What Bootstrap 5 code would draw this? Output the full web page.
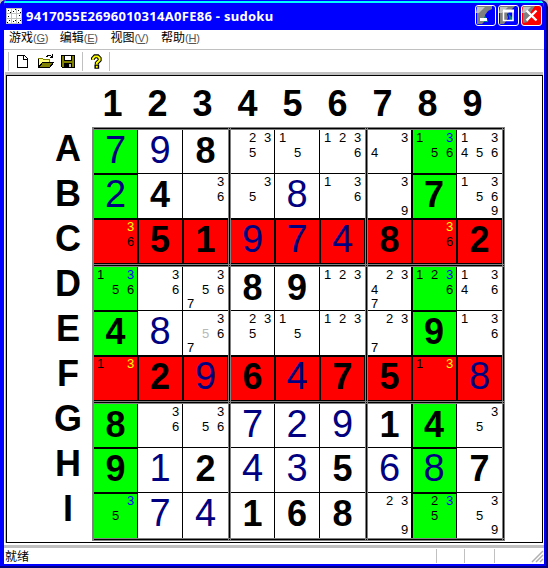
<!DOCTYPE html>
<html lang="zh-CN">
<head>
<meta charset="utf-8">
<title>sudoku</title>
<link href="https://cdn.jsdelivr.net/npm/bootstrap@5.3.0/dist/css/bootstrap.min.css" rel="stylesheet">
<style>
html,body{width:548px;height:568px;overflow:hidden;margin:0}
body{font-family:"Liberation Sans","Noto Sans CJK SC",sans-serif;font-size:12px;line-height:1;color:#000;background:#c0c0c0}
.shade{width:548px;height:568px;background:#000080;border-radius:6px 7px 0 0;padding:0 2px 2px 0}
.win{width:546px;height:566px;background:#fff;border:solid #00f;border-width:0 2px 2px 4px;border-radius:6px 7px 0 0;overflow:hidden}
.titlebar{height:30px;margin:0 -2px 0 -4px;padding:2px 4px 0 6px;background:linear-gradient(#00f 0 1px,#0ff 1px 3px,#00f 3px)}
.caption{font:bold 13px "Noto Sans",sans-serif;color:#fff;letter-spacing:.28px;margin-left:4px;white-space:nowrap}
.menu{height:21px;border-bottom:1px solid #c0c0c0;padding:0 5px 2px}
.menu span{width:50.7px;white-space:nowrap}
.menu small{font:11px "Liberation Sans",sans-serif;color:#555;letter-spacing:-.2px}
.tools{height:22px;padding:2px 0 0 4px}
.sep{width:1px;height:19px;background:#c0c0c0}
.client{height:471px;border:solid #c0c0c0;border-width:3px 0 0 1px;margin-left:1px;margin-right:1px}
.paper{height:468px;border:1px solid #000;width:537px;padding:12px 0 0 46px}
.heads{height:39px;padding-left:37px}
.heads div,.rowname{font-weight:bold;font-size:36px}
.heads div{width:45px;text-align:center;line-height:31px}
.names{width:32px;margin:0 8px 0 -1px;height:413px}
.rowname{height:45px;line-height:43px;text-align:center}
.board{display:grid;width:413px;height:413px;background:#000;
grid-template-columns:2px 43px 1px 44px 1px 45px 3px 43px 1px 44px 1px 45px 3px 43px 1px 44px 1px 45px 3px;
grid-template-rows:3px 43px 1px 44px 1px 45px 3px 43px 1px 44px 1px 45px 3px 43px 1px 44px 1px 45px 3px}
.band-v{border:solid #808080;border-width:0 1px;grid-row:1/-1}
.band-h{border:solid #808080;border-width:1px 0;grid-column:1/-1}
.sq{--t:0px;--l:0px;--b:0px;--r:0px;background:#fff;text-align:center;white-space:nowrap;z-index:1;box-shadow:inset var(--l) var(--t) #000,inset var(--r) var(--b) #000}
.sq.green{background:#0f0}.sq.red{background:#f00}
.sq.edge-t{--t:1px}.sq.edge-l{--l:1px}.sq.edge-b{--b:-1px}.sq.edge-r{--r:-1px}
.given{font-size:36px;font-weight:bold;line-height:42px}
.given,.found{height:100%}
.found{font-size:38px;line-height:41px;color:#000080}
.notes{display:grid;grid-template:repeat(3,15px)/repeat(3,15px);font-size:13px;line-height:15px;height:43px}
.notes.first{margin-left:-1px}
.notes .low{line-height:14px}
.green .n3{color:#00f}.red .n3{color:#ff0}.dim{color:#b8b8b8}
.gap-line{height:3px;background:#c0c0c0;margin-top:2px}
.status{height:16px;padding-left:1px;line-height:15px}
.status .ready{width:431px;padding-top:2px}
.status i{width:1px;height:14px;background:#c0c0c0;margin-top:1px}
.i2{margin-left:27px}.i3{margin-left:29px}
</style>
<script src="https://cdn.jsdelivr.net/npm/bootstrap@5.3.0/dist/js/bootstrap.bundle.min.js"></script>
</head>
<body>
<div class="shade"><div class="win d-flex flex-column">
<header class="titlebar d-flex align-items-center">
<svg width="16" height="16" shape-rendering="crispEdges"><path fill="#fff" d="M0 0h16v16H0z"/><path d="M5.5 0v16M10.5 0v16M0 5.5h16M0 10.5h16M0 .5h16M0 15.5h16M.5 0v16M15.5 0v16" stroke="#c0c0c0"/><path d="M2 2h1v1H2zM4 4h1v1H4zM7 3h1v1H7zM9 1h1v1H9zM12 2h1v1h-1zM14 4h1v1h-1zM2 8h1v1H2zM13 7h1v1h-1zM3 12h1v1H3zM1 14h1v1H1zM7 13h1v1H7zM9 12h1v1H9zM12 14h1v1h-1zM14 12h1v1h-1z"/></svg>
<div class="caption flex-grow-1">9417055E2696010314A0FE86 - sudoku</div>
<div class="d-flex" style="gap:2px">
<svg width="21" height="21"><rect x=".5" y=".5" width="20" height="20" rx="2.5" fill="#00f" stroke="#fff"/><path fill="#808080" d="M2 1h15v3l-4 2-3 4 1 5-4 4H2z"/><path fill="#c0c0c0" d="M2 2h8L4 8H1z"/><path fill="#008080" d="M9 11l4 4v2H9z"/><path fill="#fff" d="M5 13h7v3H5z"/></svg>
<svg width="21" height="21"><rect x=".5" y=".5" width="20" height="20" rx="2.5" fill="#00f" stroke="#fff"/><path fill="#808080" d="M2 1h15L9 9l1 4-4 6H2z"/><path fill="#c0c0c0" d="M2 2h8L4 8H1z"/><path fill="#008080" d="M10 8l6 6v2h-4z"/><path fill="none" stroke="#fff" stroke-width="1.5" d="M5.5 6v9.5h9.5V6"/><path stroke="#fff" stroke-width="3" d="M5 6h11"/></svg>
<svg width="21" height="21"><rect x=".5" y=".5" width="20" height="20" rx="2.5" fill="#f00" stroke="#fff"/><path fill="#808080" d="M2 1h12L9 8l-2 9-5 1z"/><path fill="#c0c0c0" d="M2 2h8L4 8H1z"/><path stroke="#fff" stroke-width="2.4" d="M5.500 5.500l10 10M15.500 5.500l-10 10"/></svg>
</div>
</header>
<nav class="menu d-flex align-items-center">
<span>游戏<small>(<u>G</u>)</small></span><span>编辑<small>(<u>E</u>)</small></span><span>视图<small>(<u>V</u>)</small></span><span>帮助<small>(<u>H</u>)</small></span>
</nav>
<div class="tools d-flex">
<div class="sep"></div>
<svg class="flex-shrink-0" width="73" height="19" shape-rendering="crispEdges">
<path d="M8.500 2.500h7l3 3v9h-10zM14.500 2.500v4h4" transform="translate(0 1)" fill="#fff" stroke="#000"/>
<g transform="translate(0 1)"><path d="M29.500 13.500v-8h4l1 1h6v3" fill="#ffff80" stroke="#808000"/><path d="M29.500 14.500l4-5h11l-4 5z" fill="#808000" stroke="#000"/><path d="M29.500 14V6M37.500 3.500l2-1h2l2 2M43.500 1v4M41 4.500h3" fill="none" stroke="#000"/>
<path d="M52.500 2.500h13v12h-12l-1-1z" fill="#808000" stroke="#000"/><path fill="#fff" stroke="#000" d="M55.500 2.500h7v5h-7z"/><path d="M55 10h8v5h-8z"/><path fill="#c0c0c0" d="M60 11h2v3h-2z"/></g></svg>
<div class="sep"></div>
<svg class="flex-shrink-0" width="26" height="19"><g transform="translate(.5 1.500) scale(.95)"><path fill="none" stroke="#000" stroke-width="4.200" d="M10 6.500V5.200L12 3h3l2 2v2l-3 3v1.500"/><path fill="#000" d="M11.500 11.500h5v4.500h-5z"/><path fill="none" stroke="#ff0" stroke-width="2" d="M10 6.500V5.200L12 3h3l2 2v2l-3 3v1.500"/><path fill="#ff0" d="M13 13h2v2h-2z"/></g></svg>
<div class="sep"></div>
</div>
<main class="client"><div class="paper">
<div class="heads d-flex" id="heads"></div>
<div class="d-flex"><div class="names" id="names"></div><div class="board" id="board"></div></div>
</div></main>
<div class="gap-line"></div>
<footer class="status d-flex"><div class="ready">就绪</div><i></i><i class="i2"></i><i class="i3"></i>
<svg class="ms-auto" width="14" height="15"><path d="M2 14L13 3M6 14l7-7M10 14l3-3" stroke="#b0b0b0" stroke-width="1.500"/></svg></footer>
</div></div>
<script>
// g = given digit, f = filled-in digit, n = candidate notes (~ dims the next candidate)
const rows=[
"f7 f9 g8 n235 n15 n1236 n34 n1356 n13456",
"f2 g4 n36 n35 f8 n136 n39 g7 n13569",
"n36 g5 g1 f9 f7 f4 g8 n36 g2",
"n1356 n36 n3567 g8 g9 n123 n2347 n1236 n1346",
"g4 f8 n3~567 n235 n15 n123 n237 g9 n136",
"n13 g2 f9 g6 f4 g7 g5 n13 f8",
"g8 n36 n356 f7 f2 f9 g1 g4 n35",
"g9 f1 g2 f4 f3 g5 f6 f8 g7",
"n35 f7 f4 g1 g6 g8 n239 n235 n359"];
const board=document.getElementById("board");
let html="";
for(let i=0;i<4;i++){const t=i*6+1;html+=`<div class="band-v" style="grid-column:${t}"></div><div class="band-h" style="grid-row:${t}"></div>`}
rows.forEach((line,r)=>line.split(" ").forEach((v,c)=>{
  const red=r===2||r===5,green=!red&&(c===0||c===7);
  let cls="sq";
  if(red)cls+=" red edge-b"+(c%3===2?" edge-r":"");
  if(green)cls+=" green";
  if((red||green)&&r%3)cls+=" edge-t";
  if((red||green)&&c%3)cls+=" edge-l";
  let inner=v.slice(1);
  if(v[0]==="n"){
    inner=[...v.slice(1).matchAll(/(~?)(\d)/g)].map(m=>{
      const d=+m[2];return `<span class="n${d}${m[1]?" dim":""}${d>6?" low":""}" style="grid-area:${Math.ceil(d/3)}/${(d-1)%3+1}">${d}</span>`}).join("");
    inner=`<div class="notes${c%3?"":" first"}">${inner}</div>`;
  }else cls+=v[0]==="g"?" given":" found";
  html+=`<div class="${cls}" style="grid-area:${r*2+2}/${c*2+2}">${inner}</div>`;
}));
board.innerHTML=html;
document.getElementById("heads").innerHTML=[..."123456789"].map(x=>`<div>${x}</div>`).join("");
document.getElementById("names").innerHTML=[..."ABCDEFGHI"].map(x=>`<div class="rowname">${x}</div>`).join("");
</script>
</body>
</html>
